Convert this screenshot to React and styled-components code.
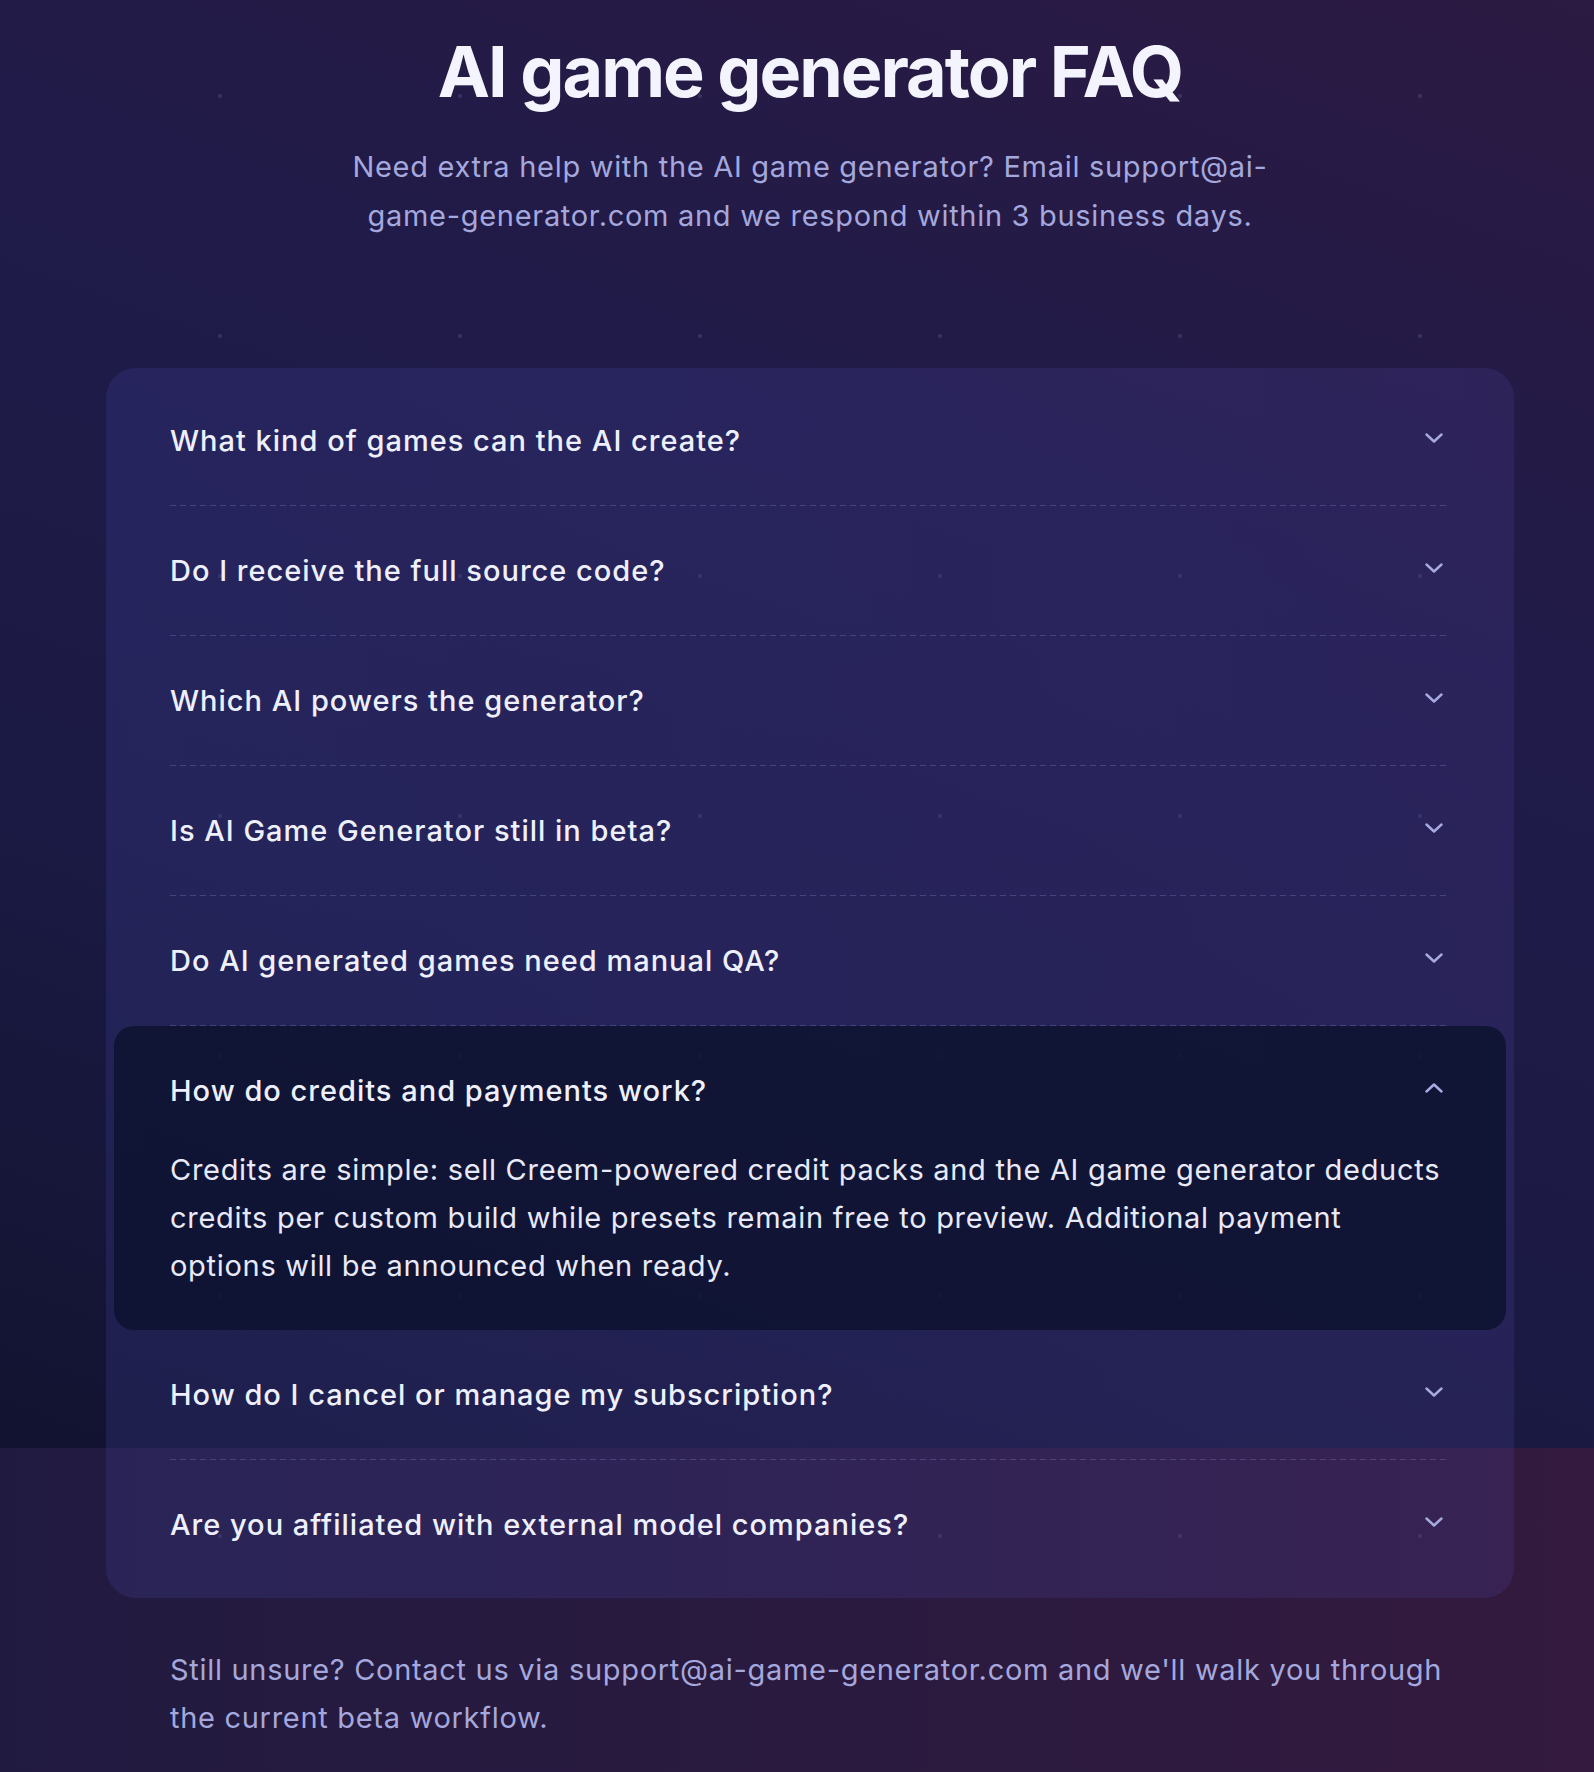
import React from "react";
import styled, { createGlobalStyle } from "styled-components";

const GlobalStyle = createGlobalStyle`
  * { box-sizing: border-box; }
  body {
    margin: 0;
    background: #2a1a3e;
    font-family: "Inter", "Noto Sans", sans-serif;
    -webkit-font-smoothing: antialiased;
  }
`;

const Page = styled.main`
  min-height: 100vh;
  padding: 30px 0 30px 26px;
  background:
    radial-gradient(circle, rgba(160, 160, 230, 0.16) 0 1.6px, transparent 2.4px) 100px -24px / 240px 240px,
    linear-gradient(200deg, #2b1a42 0%, #201b49 35%, #1b1a44 68%, #121330 100%) top left / 100% 1448px no-repeat,
    linear-gradient(90deg, #211a40 0%, #2c1a3f 60%, #331a3e 100%);
`;

const Container = styled.div`
  width: 1408px;
  margin: 0 auto;
`;

const Header = styled.header`
  text-align: center;
`;

const Title = styled.h1`
  margin: 0;
  font-size: 70px;
  line-height: 84px;
  font-weight: 700;
  letter-spacing: -2px;
  color: #f3f4ff;
`;

const Subtitle = styled.p`
  max-width: 960px;
  margin: 28px auto 0;
  font-size: 29px;
  line-height: 49px;
  letter-spacing: 0.7px;
  color: #a4a8dc;
`;

const Card = styled.section`
  margin-top: 128px;
  padding: 8px;
  border-radius: 30px;
  background: linear-gradient(90deg, rgba(60, 62, 150, 0.27), rgba(70, 58, 140, 0.27));
`;

const Item = styled.div`
  padding: 0 56px;
  border-radius: 20px;
  background: ${({ $open }) => ($open ? "rgba(14, 19, 48, 0.86)" : "transparent")};
`;

const ItemBody = styled.div`
  background-image: ${({ $divider }) =>
    $divider
      ? "repeating-linear-gradient(90deg, rgba(140, 140, 210, 0.3) 0 6px, transparent 6px 10px)"
      : "none"};
  background-size: 100% 1px;
  background-position: bottom left;
  background-repeat: no-repeat;
`;

const Question = styled.div`
  display: flex;
  align-items: center;
  justify-content: space-between;
  padding: 40px 0;
  font-size: 29px;
  line-height: 50px;
  font-weight: 500;
  letter-spacing: 1px;
  color: #eef0ff;
`;

const Chevron = styled.svg`
  width: 18px;
  height: 10px;
  margin-right: 7px;
  margin-top: -6px;
  flex-shrink: 0;
  transform: ${({ $up }) => ($up ? "rotate(180deg)" : "none")};
`;

const Answer = styled.p`
  margin: -10px 0 0;
  padding-bottom: 40px;
  font-size: 29px;
  line-height: 48px;
  letter-spacing: 0.7px;
  color: #e8eafc;
`;

const Footer = styled.p`
  margin: 48px 0 0;
  padding: 0 64px;
  font-size: 29px;
  line-height: 48px;
  letter-spacing: 0.7px;
  color: #a4a8dc;
`;

const faqs = [
  { q: "What kind of games can the AI create?" },
  { q: "Do I receive the full source code?" },
  { q: "Which AI powers the generator?" },
  { q: "Is AI Game Generator still in beta?" },
  { q: "Do AI generated games need manual QA?" },
  {
    q: "How do credits and payments work?",
    a: "Credits are simple: sell Creem-powered credit packs and the AI game generator deducts credits per custom build while presets remain free to preview. Additional payment options will be announced when ready.",
    open: true,
  },
  { q: "How do I cancel or manage my subscription?" },
  { q: "Are you affiliated with external model companies?" },
];

const ChevronIcon = ({ up }) => (
  <Chevron $up={up} viewBox="0 0 18 10" fill="none">
    <polyline
      points="1.5,1.5 9,8.5 16.5,1.5"
      stroke="#a7abdf"
      strokeWidth="2.4"
      strokeLinecap="round"
      strokeLinejoin="round"
    />
  </Chevron>
);

const App = () => {
  return (
    <Page>
      <GlobalStyle />
      <Container>
        <Header>
          <Title>AI game generator FAQ</Title>
          <Subtitle>
            Need extra help with the AI game generator? Email support@ai-game-generator.com and we
            respond within 3 business days.
          </Subtitle>
        </Header>

        <Card>
          {faqs.map((item, i) => (
            <Item key={item.q} $open={item.open}>
              {/* open item and the last one carry no dashed rule */}
              <ItemBody $divider={!item.open && i < faqs.length - 1}>
                <Question>
                  <span>{item.q}</span>
                  <ChevronIcon up={item.open} />
                </Question>
                {item.open && <Answer>{item.a}</Answer>}
              </ItemBody>
            </Item>
          ))}
        </Card>

        <Footer>
          Still unsure? Contact us via support@ai-game-generator.com and we'll walk you through the
          current beta workflow.
        </Footer>
      </Container>
    </Page>
  );
};

export default App;
